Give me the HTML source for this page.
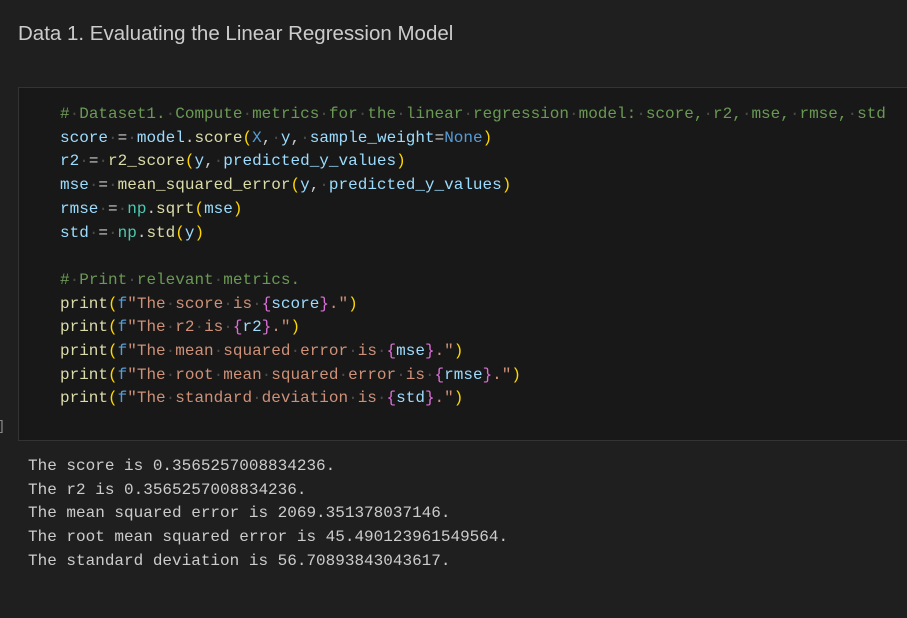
<!DOCTYPE html>
<html><head><meta charset="utf-8"><style>
body{margin:0;width:907px;height:618px;background:#1f1f1f;overflow:hidden;position:relative;font-family:"Liberation Sans",sans-serif}
.t{position:absolute;left:18px;top:22px;font-size:20.5px;color:#cccccc}
.cell{position:absolute;left:18px;top:87px;width:900px;height:354px;background:#181818;border:1px solid #333;box-sizing:border-box}
pre{margin:0;font-family:"Liberation Mono",monospace;font-size:16px;line-height:23.7px}
.code{position:absolute;left:60px;top:103px;color:#cccccc}
.out{position:absolute;left:28px;top:455px;color:#cccccc}
.c{color:#6a9955}.v{color:#9cdcfe}.f{color:#dcdcaa}.p{color:#ffd700}.k{color:#569cd6}.s{color:#ce9178}.n{color:#4ec9b0}.b{color:#da70d6}.d{color:#4a4a4a}
.br{position:absolute;left:-3px;top:419px;color:#888;font-family:"Liberation Mono",monospace;font-size:14px}
</style></head><body>
<div class="t">Data 1. Evaluating the Linear Regression Model</div>
<div class="cell"></div>
<div class="br">]</div>
<pre class="code"><span class="c">#<span class="d">·</span>Dataset1.<span class="d">·</span>Compute<span class="d">·</span>metrics<span class="d">·</span>for<span class="d">·</span>the<span class="d">·</span>linear<span class="d">·</span>regression<span class="d">·</span>model:<span class="d">·</span>score,<span class="d">·</span>r2,<span class="d">·</span>mse,<span class="d">·</span>rmse,<span class="d">·</span>std</span>
<span class="v">score</span><span class="d">·</span>=<span class="d">·</span><span class="v">model</span>.<span class="f">score</span><span class="p">(</span><span class="k">X</span>,<span class="d">·</span><span class="v">y</span>,<span class="d">·</span><span class="v">sample_weight</span>=<span class="k">None</span><span class="p">)</span>
<span class="v">r2</span><span class="d">·</span>=<span class="d">·</span><span class="f">r2_score</span><span class="p">(</span><span class="v">y</span>,<span class="d">·</span><span class="v">predicted_y_values</span><span class="p">)</span>
<span class="v">mse</span><span class="d">·</span>=<span class="d">·</span><span class="f">mean_squared_error</span><span class="p">(</span><span class="v">y</span>,<span class="d">·</span><span class="v">predicted_y_values</span><span class="p">)</span>
<span class="v">rmse</span><span class="d">·</span>=<span class="d">·</span><span class="n">np</span>.<span class="f">sqrt</span><span class="p">(</span><span class="v">mse</span><span class="p">)</span>
<span class="v">std</span><span class="d">·</span>=<span class="d">·</span><span class="n">np</span>.<span class="f">std</span><span class="p">(</span><span class="v">y</span><span class="p">)</span>

<span class="c">#<span class="d">·</span>Print<span class="d">·</span>relevant<span class="d">·</span>metrics.</span>
<span class="f">print</span><span class="p">(</span><span class="k">f</span><span class="s">"The<span class="d">·</span>score<span class="d">·</span>is<span class="d">·</span></span><span class="b">{</span><span class="v">score</span><span class="b">}</span><span class="s">."</span><span class="p">)</span>
<span class="f">print</span><span class="p">(</span><span class="k">f</span><span class="s">"The<span class="d">·</span>r2<span class="d">·</span>is<span class="d">·</span></span><span class="b">{</span><span class="v">r2</span><span class="b">}</span><span class="s">."</span><span class="p">)</span>
<span class="f">print</span><span class="p">(</span><span class="k">f</span><span class="s">"The<span class="d">·</span>mean<span class="d">·</span>squared<span class="d">·</span>error<span class="d">·</span>is<span class="d">·</span></span><span class="b">{</span><span class="v">mse</span><span class="b">}</span><span class="s">."</span><span class="p">)</span>
<span class="f">print</span><span class="p">(</span><span class="k">f</span><span class="s">"The<span class="d">·</span>root<span class="d">·</span>mean<span class="d">·</span>squared<span class="d">·</span>error<span class="d">·</span>is<span class="d">·</span></span><span class="b">{</span><span class="v">rmse</span><span class="b">}</span><span class="s">."</span><span class="p">)</span>
<span class="f">print</span><span class="p">(</span><span class="k">f</span><span class="s">"The<span class="d">·</span>standard<span class="d">·</span>deviation<span class="d">·</span>is<span class="d">·</span></span><span class="b">{</span><span class="v">std</span><span class="b">}</span><span class="s">."</span><span class="p">)</span></pre>
<pre class="out">The score is 0.3565257008834236.
The r2 is 0.3565257008834236.
The mean squared error is 2069.351378037146.
The root mean squared error is 45.490123961549564.
The standard deviation is 56.70893843043617.</pre>
</body></html>
